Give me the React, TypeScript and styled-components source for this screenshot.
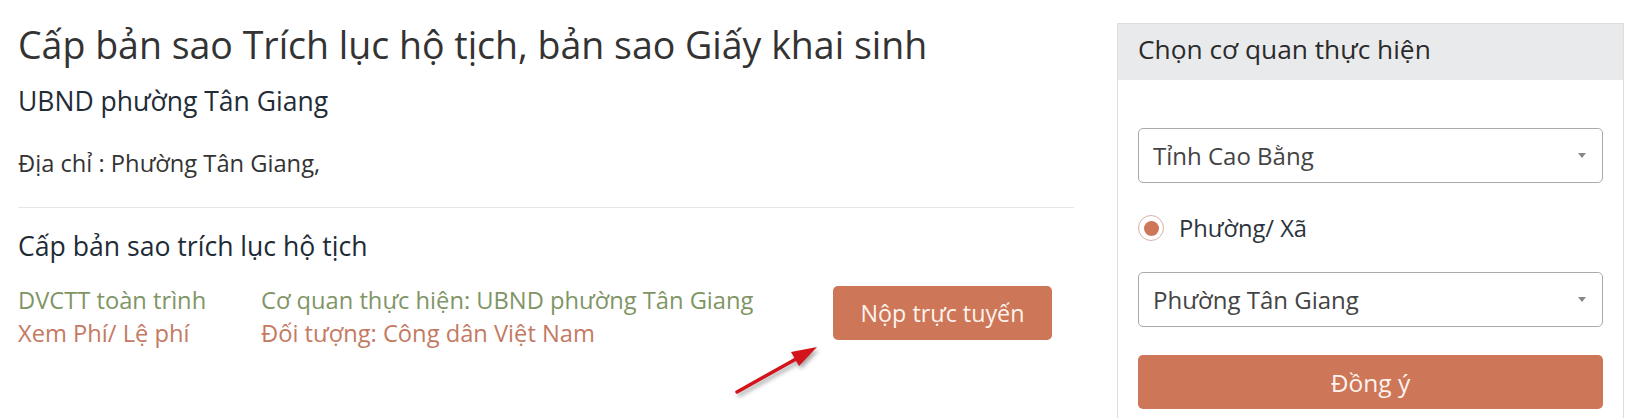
import React from 'react';
import styled, { createGlobalStyle } from 'styled-components';

const GlobalStyle = createGlobalStyle`
	html, body {
		margin: 0;
		padding: 0;
		background: #ffffff;
		overflow: hidden;
	}
	body {
		font-family: 'Open Sans', 'Noto Sans', sans-serif;
		color: #333333;
	}
	* {
		box-sizing: border-box;
	}
`;

const Page = styled.div`
	display: flex;
	align-items: flex-start;
	padding: 0 3px 0 18px;
	width: 1627px;
`;

const Main = styled.section`
	position: relative;
	flex: 0 0 1056px;
	margin-right: 43px;
`;

const Title = styled.h1`
	margin: 23px 0 0;
	font-size: 37.5px;
	font-weight: 400;
	line-height: 44px;
	color: #333333;
`;

const Agency = styled.h2`
	margin: 14px 0 0;
	font-size: 26.5px;
	font-weight: 400;
	line-height: 40px;
	color: #222c36;
`;

const Address = styled.p`
	margin: 25px 0 0;
	font-size: 23.7px;
	line-height: 34px;
	color: #333333;
`;

const Divider = styled.hr`
	margin: 27px 0 0;
	border: 0;
	border-top: 1px solid #e6e6e6;
`;

const SectionTitle = styled.h3`
	margin: 18px 0 0;
	font-size: 26.6px;
	font-weight: 400;
	line-height: 40px;
	color: #1e2b37;
`;

const ServiceRow = styled.div`
	display: grid;
	grid-template-columns: 243px 572px auto;
	align-items: start;
	margin-top: 18px;
`;

const InfoColumn = styled.div`
	display: flex;
	flex-direction: column;
`;

const InfoLine = styled.span<{ $tone: 'green' | 'orange' }>`
	font-size: 23.7px;
	line-height: 33px;
	white-space: nowrap;
	color: ${({ $tone }) => ($tone === 'green' ? '#7f9566' : '#c47a62')};
`;

const SubmitButton = styled.button`
	margin-top: 2px;
	width: 219px;
	height: 54px;
	border: 0;
	border-radius: 5px;
	background: #cd7758;
	color: #fdf3ee;
	font-family: inherit;
	font-size: 23.3px;
	cursor: pointer;
`;

const Pointer = styled.svg`
	position: absolute;
	left: 712px;
	top: 340px;
	overflow: visible;
	filter: drop-shadow(2px 3px 2px rgba(0, 0, 0, 0.35));
`;

const Card = styled.aside`
	flex: 1;
	margin-top: 23px;
	border: 1px solid #dddddd;
	border-bottom: 0;
`;

const CardHeader = styled.div`
	height: 56px;
	padding: 0 20px 6px;
	display: flex;
	align-items: center;
	background: #e9eaec;
	font-size: 26.3px;
	color: #2b2b2b;
`;

const CardBody = styled.div`
	display: flex;
	flex-direction: column;
	padding: 48px 20px 20px;
`;

const Select = styled.div<{ $gap?: number }>`
	display: flex;
	align-items: center;
	justify-content: space-between;
	height: 55px;
	margin-top: ${({ $gap }) => $gap ?? 0}px;
	padding: 0 16px 0 14px;
	border: 1px solid #aaaaaa;
	border-radius: 5px;
	font-size: 24px;
	color: #444444;
`;

const Caret = styled.span`
	width: 0;
	height: 0;
	border-left: 4px solid transparent;
	border-right: 4px solid transparent;
	border-top: 5px solid #888888;
`;

const RadioRow = styled.label`
	display: flex;
	align-items: center;
	gap: 15px;
	margin-top: 31px;
	height: 28px;
	font-size: 23.7px;
	line-height: 28px;
	color: #2b333b;
`;

const RadioMark = styled.span`
	display: flex;
	align-items: center;
	justify-content: center;
	width: 26px;
	height: 26px;
	border: 1px solid #d7b2a4;
	border-radius: 50%;
	background: #ffffff;

	&::after {
		content: '';
		width: 15px;
		height: 15px;
		border-radius: 50%;
		background: #cd7758;
	}
`;

const ConfirmButton = styled.button`
	margin-top: 28px;
	height: 54px;
	border: 0;
	border-radius: 5px;
	background: #cd7758;
	color: #fdf3ee;
	font-family: inherit;
	font-size: 24.5px;
	cursor: pointer;
`;

export default function App() {
	return (
		<>
			<GlobalStyle />
			<Page>
				<Main>
					<Title>Cấp bản sao Trích lục hộ tịch, bản sao Giấy khai sinh</Title>
					<Agency>UBND phường Tân Giang</Agency>
					<Address>Địa chỉ : Phường Tân Giang,</Address>
					<Divider />
					<SectionTitle>Cấp bản sao trích lục hộ tịch</SectionTitle>
					<ServiceRow>
						<InfoColumn>
							<InfoLine $tone="green">DVCTT toàn trình</InfoLine>
							<InfoLine $tone="orange">Xem Phí/ Lệ phí</InfoLine>
						</InfoColumn>
						<InfoColumn>
							<InfoLine $tone="green">Cơ quan thực hiện: UBND phường Tân Giang</InfoLine>
							<InfoLine $tone="orange">Đối tượng: Công dân Việt Nam</InfoLine>
						</InfoColumn>
						<SubmitButton>Nộp trực tuyến</SubmitButton>
					</ServiceRow>
					<Pointer width="100" height="60" viewBox="0 0 100 60">
						<line x1="7" y1="52" x2="66" y2="19" stroke="#d3141b" strokeWidth="3.5" strokeLinecap="round" />
						<polygon points="87,7 69,26 61,12" fill="#d3141b" />
					</Pointer>
				</Main>
				<Card>
					<CardHeader>Chọn cơ quan thực hiện</CardHeader>
					<CardBody>
						<Select>
							<span>Tỉnh Cao Bằng</span>
							<Caret />
						</Select>
						<RadioRow>
							<RadioMark />
							Phường/ Xã
						</RadioRow>
						<Select $gap={30}>
							<span>Phường Tân Giang</span>
							<Caret />
						</Select>
						<ConfirmButton>Đồng ý</ConfirmButton>
					</CardBody>
				</Card>
			</Page>
		</>
	);
}
